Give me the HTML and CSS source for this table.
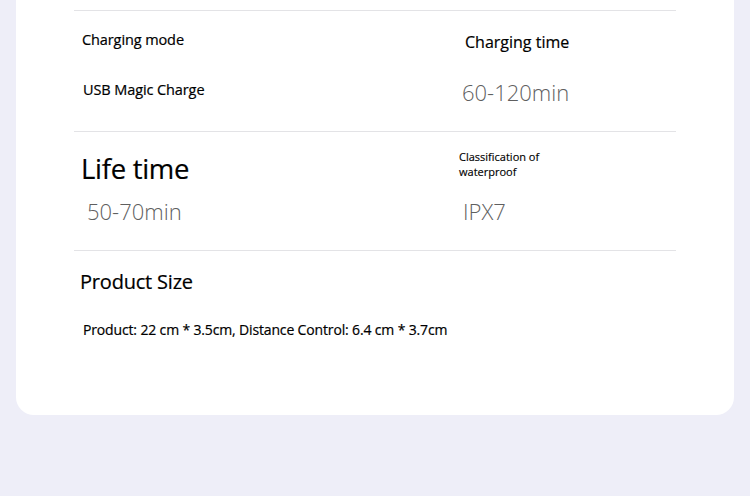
FILE: index.html
```html
<!DOCTYPE html>
<html lang="en">
<head>
<meta charset="utf-8">
<title>Specs</title>
<link rel="stylesheet" href="styles.css">
</head>
<body>
<div class="card">
  <div class="specs">
    <div class="row row-1">
      <div class="cell cell-left">
        <div class="label label-sm l-mode">Charging mode</div>
        <div class="label label-sm l-usb">USB Magic Charge</div>
      </div>
      <div class="cell cell-right">
        <div class="label label-md l-ctime">Charging time</div>
        <div class="value v-ctime">60-120min</div>
      </div>
    </div>
    <div class="row row-2">
      <div class="cell cell-left">
        <div class="label label-xl l-life">Life time</div>
        <div class="value v-life">50-70min</div>
      </div>
      <div class="cell cell-right">
        <div class="label label-xs l-water">Classification of<br>waterproof</div>
        <div class="value v-ipx">IPX7</div>
      </div>
    </div>
    <div class="row row-3">
      <div class="cell cell-full">
        <div class="label label-lg l-size">Product Size</div>
        <div class="label label-sm l-dims">Product: 22 cm * 3.5cm, Distance Control: 6.4 cm * 3.7cm</div>
      </div>
    </div>
  </div>
</div>
</body>
</html>
```
FILE: styles.css
```css
html, body {
  margin: 0;
  padding: 0;
}
body {
  background: #eeeef8;
  width: 750px;
  height: 496px;
  overflow: hidden;
  font-family: "Open Sans", "Noto Sans", sans-serif;
  color: #111;
}
.card {
  margin: 0 16px;
  background: #ffffff;
  border-radius: 0 0 18px 18px;
  padding-top: 10px;
  height: 405px;
}
.specs {
  margin-left: 58px;
  width: 602px;
}
.row {
  display: grid;
  grid-template-columns: 384px 1fr;
  border-top: 1px solid #e3e3e6;
}
.row-1 { height: 120px; }
.row-2 { height: 118px; }
.row-3 { height: 120px; }
.cell {
  display: flex;
  flex-direction: column;
  align-items: flex-start;
}
.cell-full { grid-column: 1 / 3; }

.label {
  color: #000;
  white-space: nowrap;
  font-weight: 400;
  -webkit-text-stroke: 0.2px #000;
}
.value { color: #5f5f5f; font-weight: 300; }

.label-sm { font-size: 14.5px; line-height: 15px; letter-spacing: -0.1px; }
.label-md { font-size: 16px; line-height: 16px; letter-spacing: 0; }
.label-lg { font-size: 20px; line-height: 20px; letter-spacing: -0.2px; }
.label-xl { font-size: 27.5px; line-height: 27px; letter-spacing: -0.3px; }
.label-xs { font-size: 11px; line-height: 15px; letter-spacing: 0; -webkit-text-stroke: 0.15px #000; }

.value { font-size: 22px; line-height: 22px; }

.l-mode { margin: 21px 0 0 8px; }
.l-usb { margin: 35px 0 0 9px; }
.l-ctime { margin: 23px 0 0 7px; }
.v-ctime { margin: 31px 0 0 4px; }

.l-life { margin: 23px 0 0 7px; }
.v-life { margin: 18px 0 0 13px; }
.l-water { margin: 17px 0 0 1px; }
.v-ipx { margin: 21px 0 0 5px; }

.l-size { margin: 21px 0 0 6px; }
.l-dims { margin: 30px 0 0 9px; font-size: 14px; letter-spacing: -0.15px; }
```
